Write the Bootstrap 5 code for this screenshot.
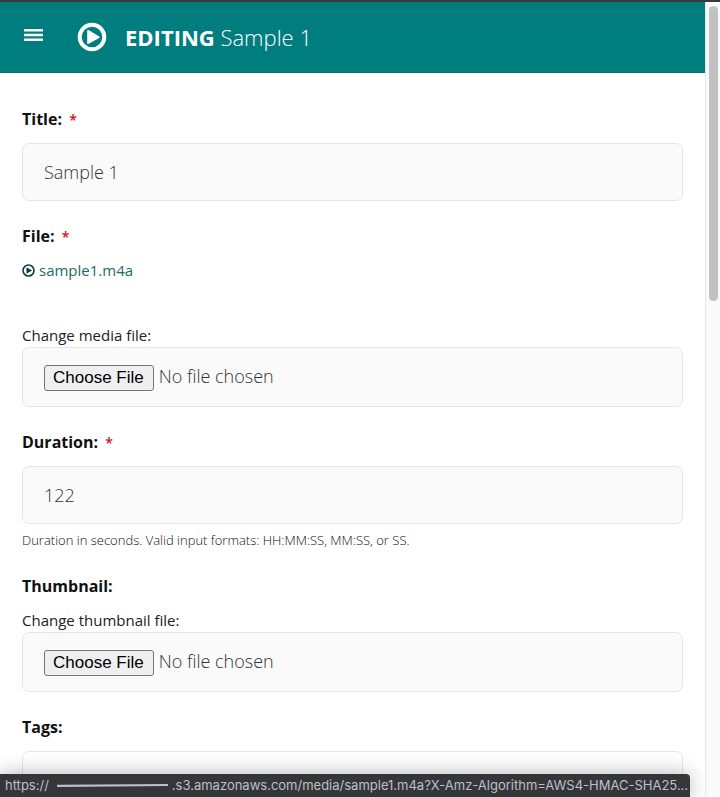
<!DOCTYPE html>
<html lang="en">
<head>
<meta charset="utf-8">
<meta name="viewport" content="width=device-width, initial-scale=1">
<title>Editing Sample 1</title>
<link href="https://cdn.jsdelivr.net/npm/bootstrap@5.3.0/dist/css/bootstrap.min.css" rel="stylesheet">
<style>
  body { font-family: "Open Sans", "Noto Sans", sans-serif; color: #111; background: #fff; }
  .window-edge { height: 2px; background: #3a383d; }
  .top-bar { background: #007d7f; border-bottom: 1px solid #056e70; padding: 0 22px; height: 71px; }
  .menu-btn { width: 23px; height: 24px; margin-bottom: 5px; }
  .page-logo { margin: 0 18px 0 32px; }
  .page-title { font-size: 22px; line-height: 32px; font-weight: 300; }
  .page-title strong { font-weight: 700; }
  .edit-form { padding: 34px 22px 0; }
  .field { margin-bottom: 23px; }
  .field-label { display: block; font-size: 16px; line-height: 24px; font-weight: 700; margin-bottom: 12px; }
  .required-mark { color: #c4161c; margin-left: 3px; font-size: 14px; line-height: 1; font-weight: 600; }
  .sub-label { display: block; font-size: 15px; line-height: 20px; padding-bottom: 2px; color: #222; }
  .file-link { font-size: 15px; line-height: 20px; color: #1b6b66; margin-bottom: 44px; }
  .field-box, .field-box:focus { background: #fafafa; border: 1px solid #e6e6e6; border-radius: 7px; padding: 0 21px; height: 58px; font-size: 18px; font-weight: 300; color: #333; }
  .file-box { height: 60px; padding: 14px 21px; line-height: 28px; }
  .file-box::file-selector-button,
  .file-box:hover:not(:disabled):not([readonly])::file-selector-button {
    font-family: "Liberation Sans", Arial, sans-serif; font-size: 17px; font-weight: 400; line-height: 20px; color: #000;
    background: #efefef; border: 1px solid #767676; border-radius: 3px; padding: 2px 9px 2px 8px; margin: 0 5px 0 0;
  }
  .help-line { font-size: 13px; line-height: 18px; padding-bottom: 2px; font-weight: 300; color: #111; margin-top: 7px; }
  .tags-box, .tags-box:focus { background: #fff; }
  .scroll-track { width: 15px; background: #fafafa; border-left: 1px solid #e8e8e8; padding: 4px 2px 0 3px; }
  .scroll-thumb { width: 9px; height: 37vh; background: #c1c1c1; }
  .status-bar { right: 30px; height: 23px; padding: 0 0 0 5px; background: #35363a; color: #bfc0c3; border-top-right-radius: 4px; box-shadow: 0 0 20px rgba(0, 0, 0, .3); font-family: Inter, Roboto, sans-serif; font-size: 13px; line-height: 23px; }
  .redaction { width: 111px; height: 3px; }
</style>
</head>
<body class="vh-100 overflow-hidden d-flex flex-column position-relative">
<div class="window-edge flex-shrink-0"></div>
<div class="d-flex flex-grow-1 overflow-hidden">
  <div class="flex-grow-1 overflow-hidden">
    <header class="top-bar d-flex align-items-center text-white">
      <button type="button" class="menu-btn btn p-0 border-0 d-flex align-items-center justify-content-center" aria-label="Menu">
        <svg width="19" height="14" viewBox="0 0 19 14" fill="#fff" aria-hidden="true"><path d="M0 1h19v2.4H0zM0 5.8h19v2.4H0zM0 10.6h19V13H0z"/></svg>
      </button>
      <svg class="page-logo flex-shrink-0" width="30" height="30" viewBox="0 0 30 30" aria-hidden="true"><circle cx="15" cy="15" r="12.3" fill="none" stroke="#fff" stroke-width="4"/><path d="M10.2 9v12q0 1.6 1.4.8L22.3 16q1-.9 0-1.6L11.6 8.1Q10.2 7.4 10.2 9z" fill="#fff"/></svg>
      <h1 class="page-title mb-0"><strong>EDITING</strong> Sample 1</h1>
    </header>
    <main>
      <form class="edit-form">
        <div class="field">
          <label class="field-label" for="title">Title: <span class="required-mark">*</span></label>
          <input class="form-control field-box" type="text" id="title" value="Sample 1">
        </div>
        <div class="field">
          <label class="field-label" for="media">File: <span class="required-mark">*</span></label>
          <div class="file-link"><a href="#" class="d-inline-flex align-items-center gap-1 text-decoration-none text-reset"><svg width="13" height="13" viewBox="0 0 13 13" aria-hidden="true"><circle cx="6.5" cy="6.5" r="5.5" fill="none" stroke="#063f41" stroke-width="1.6"/><path d="M4.5 3.3v6.4l5.5-3.2z" fill="#063f41"/></svg>sample1.m4a</a></div>
          <label class="sub-label" for="media">Change media file:</label>
          <input class="form-control field-box file-box" type="file" id="media">
        </div>
        <div class="field">
          <label class="field-label" for="duration">Duration: <span class="required-mark">*</span></label>
          <input class="form-control field-box" type="text" id="duration" value="122" aria-describedby="duration-help">
          <div class="help-line" id="duration-help">Duration in seconds. Valid input formats: HH:MM:SS, MM:SS, or SS.</div>
        </div>
        <div class="field">
          <label class="field-label" for="thumb">Thumbnail:</label>
          <label class="sub-label" for="thumb">Change thumbnail file:</label>
          <input class="form-control field-box file-box" type="file" id="thumb">
        </div>
        <div class="field">
          <label class="field-label" for="tags">Tags:</label>
          <input class="form-control field-box tags-box" type="text" id="tags">
        </div>
      </form>
    </main>
  </div>
  <div class="scroll-track flex-shrink-0"><div class="scroll-thumb rounded-pill"></div></div>
</div>
<div class="status-bar position-absolute bottom-0 start-0 d-flex align-items-center text-nowrap">
  <span>https://</span>
  <svg class="redaction ms-2 me-1 flex-shrink-0" viewBox="0 0 111 3" aria-hidden="true"><path d="M0 .8L111 0V2L0 3z" fill="#bfc0c3"/></svg>
  <span>.s3.amazonaws.com/media/sample1.m4a?X-Amz-Algorithm=AWS4-HMAC-SHA25...</span>
</div>
<script src="https://cdn.jsdelivr.net/npm/bootstrap@5.3.0/dist/js/bootstrap.bundle.min.js"></script>
</body>
</html>
